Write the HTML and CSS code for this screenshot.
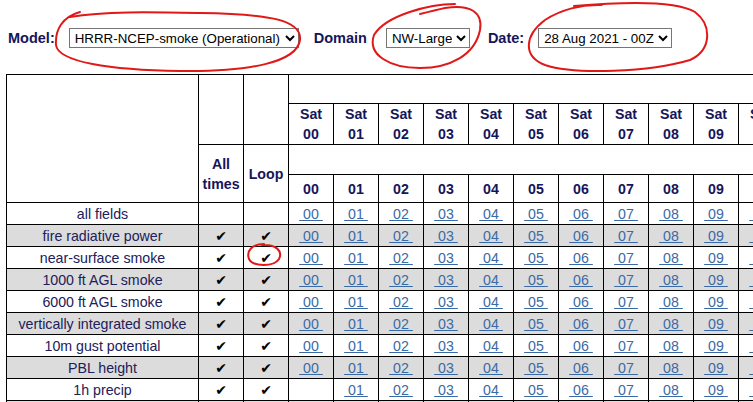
FILE: index.html
```html
<!DOCTYPE html>
<html lang="en">
<head>
  <meta charset="UTF-8" />
  <title>HRRR-Smoke Products</title>
  <meta name="viewport" content="width=device-width, initial-scale=1.0" />
  <link rel="stylesheet" href="styles.css">
</head>
<body>
  <form class="picker">
    <label class="lbl lbl-model">Model:</label>
    <select class="sel sel-model">
      <option selected>HRRR-NCEP-smoke (Operational)</option>
      <option>HRRR-smoke (Experimental)</option>
    </select>
    <label class="lbl lbl-domain">Domain</label>
    <select class="sel sel-domain">
      <option>Full</option>
      <option selected>NW-Large</option>
      <option>SW</option>
    </select>
    <label class="lbl lbl-date">Date:</label>
    <select class="sel sel-date">
      <option selected>28 Aug 2021 - 00Z</option>
      <option>27 Aug 2021 - 18Z</option>
    </select>
  </form>

  <table class="grid">
    <colgroup>
      <col class="c-name">
      <col class="c-all"><col class="c-loop">
      <col class="c-hr"><col class="c-hr"><col class="c-hr"><col class="c-hr"><col class="c-hr"><col class="c-hr">
      <col class="c-hr"><col class="c-hr"><col class="c-hr"><col class="c-hr"><col class="c-hr">
    </colgroup>
    <!-- header -->
    <tr class="h-top">
      <td class="corner" rowspan="4"></td>
      <td rowspan="2"></td>
      <td rowspan="2"></td>
      <td class="spacer" colspan="11"></td>
    </tr>
    <tr class="h-day">
      <th>Sat<br>00</th><th>Sat<br>01</th><th>Sat<br>02</th><th>Sat<br>03</th><th>Sat<br>04</th><th>Sat<br>05</th>
      <th>Sat<br>06</th><th>Sat<br>07</th><th>Sat<br>08</th><th>Sat<br>09</th><th>Sat<br>10</th>
    </tr>
    <tr class="h-gap">
      <th rowspan="2">All<br>times</th>
      <th rowspan="2">Loop</th>
      <td class="spacer" colspan="11"></td>
    </tr>
    <tr class="h-hour">
      <th>00</th><th>01</th><th>02</th><th>03</th><th>04</th><th>05</th>
      <th>06</th><th>07</th><th>08</th><th>09</th><th>10</th>
    </tr>

    <!-- fields -->
    <tr>
      <td class="name">all fields</td><td></td><td></td>
      <td><a href="#">&nbsp;00&nbsp;</a></td><td><a href="#">&nbsp;01&nbsp;</a></td><td><a href="#">&nbsp;02&nbsp;</a></td><td><a href="#">&nbsp;03&nbsp;</a></td>
      <td><a href="#">&nbsp;04&nbsp;</a></td><td><a href="#">&nbsp;05&nbsp;</a></td><td><a href="#">&nbsp;06&nbsp;</a></td><td><a href="#">&nbsp;07&nbsp;</a></td>
      <td><a href="#">&nbsp;08&nbsp;</a></td><td><a href="#">&nbsp;09&nbsp;</a></td><td><a href="#">&nbsp;10&nbsp;</a></td>
    </tr>
    <tr class="alt">
      <td class="name">fire radiative power</td><td class="chk">&#10004;</td><td class="chk">&#10004;</td>
      <td><a href="#">&nbsp;00&nbsp;</a></td><td><a href="#">&nbsp;01&nbsp;</a></td><td><a href="#">&nbsp;02&nbsp;</a></td><td><a href="#">&nbsp;03&nbsp;</a></td>
      <td><a href="#">&nbsp;04&nbsp;</a></td><td><a href="#">&nbsp;05&nbsp;</a></td><td><a href="#">&nbsp;06&nbsp;</a></td><td><a href="#">&nbsp;07&nbsp;</a></td>
      <td><a href="#">&nbsp;08&nbsp;</a></td><td><a href="#">&nbsp;09&nbsp;</a></td><td><a href="#">&nbsp;10&nbsp;</a></td>
    </tr>
    <tr>
      <td class="name">near-surface smoke</td><td class="chk">&#10004;</td><td class="chk">&#10004;</td>
      <td><a href="#">&nbsp;00&nbsp;</a></td><td><a href="#">&nbsp;01&nbsp;</a></td><td><a href="#">&nbsp;02&nbsp;</a></td><td><a href="#">&nbsp;03&nbsp;</a></td>
      <td><a href="#">&nbsp;04&nbsp;</a></td><td><a href="#">&nbsp;05&nbsp;</a></td><td><a href="#">&nbsp;06&nbsp;</a></td><td><a href="#">&nbsp;07&nbsp;</a></td>
      <td><a href="#">&nbsp;08&nbsp;</a></td><td><a href="#">&nbsp;09&nbsp;</a></td><td><a href="#">&nbsp;10&nbsp;</a></td>
    </tr>
    <tr class="alt">
      <td class="name">1000 ft AGL smoke</td><td class="chk">&#10004;</td><td class="chk">&#10004;</td>
      <td><a href="#">&nbsp;00&nbsp;</a></td><td><a href="#">&nbsp;01&nbsp;</a></td><td><a href="#">&nbsp;02&nbsp;</a></td><td><a href="#">&nbsp;03&nbsp;</a></td>
      <td><a href="#">&nbsp;04&nbsp;</a></td><td><a href="#">&nbsp;05&nbsp;</a></td><td><a href="#">&nbsp;06&nbsp;</a></td><td><a href="#">&nbsp;07&nbsp;</a></td>
      <td><a href="#">&nbsp;08&nbsp;</a></td><td><a href="#">&nbsp;09&nbsp;</a></td><td><a href="#">&nbsp;10&nbsp;</a></td>
    </tr>
    <tr>
      <td class="name">6000 ft AGL smoke</td><td class="chk">&#10004;</td><td class="chk">&#10004;</td>
      <td><a href="#">&nbsp;00&nbsp;</a></td><td><a href="#">&nbsp;01&nbsp;</a></td><td><a href="#">&nbsp;02&nbsp;</a></td><td><a href="#">&nbsp;03&nbsp;</a></td>
      <td><a href="#">&nbsp;04&nbsp;</a></td><td><a href="#">&nbsp;05&nbsp;</a></td><td><a href="#">&nbsp;06&nbsp;</a></td><td><a href="#">&nbsp;07&nbsp;</a></td>
      <td><a href="#">&nbsp;08&nbsp;</a></td><td><a href="#">&nbsp;09&nbsp;</a></td><td><a href="#">&nbsp;10&nbsp;</a></td>
    </tr>
    <tr class="alt">
      <td class="name">vertically integrated smoke</td><td class="chk">&#10004;</td><td class="chk">&#10004;</td>
      <td><a href="#">&nbsp;00&nbsp;</a></td><td><a href="#">&nbsp;01&nbsp;</a></td><td><a href="#">&nbsp;02&nbsp;</a></td><td><a href="#">&nbsp;03&nbsp;</a></td>
      <td><a href="#">&nbsp;04&nbsp;</a></td><td><a href="#">&nbsp;05&nbsp;</a></td><td><a href="#">&nbsp;06&nbsp;</a></td><td><a href="#">&nbsp;07&nbsp;</a></td>
      <td><a href="#">&nbsp;08&nbsp;</a></td><td><a href="#">&nbsp;09&nbsp;</a></td><td><a href="#">&nbsp;10&nbsp;</a></td>
    </tr>
    <tr>
      <td class="name">10m gust potential</td><td class="chk">&#10004;</td><td class="chk">&#10004;</td>
      <td><a href="#">&nbsp;00&nbsp;</a></td><td><a href="#">&nbsp;01&nbsp;</a></td><td><a href="#">&nbsp;02&nbsp;</a></td><td><a href="#">&nbsp;03&nbsp;</a></td>
      <td><a href="#">&nbsp;04&nbsp;</a></td><td><a href="#">&nbsp;05&nbsp;</a></td><td><a href="#">&nbsp;06&nbsp;</a></td><td><a href="#">&nbsp;07&nbsp;</a></td>
      <td><a href="#">&nbsp;08&nbsp;</a></td><td><a href="#">&nbsp;09&nbsp;</a></td><td><a href="#">&nbsp;10&nbsp;</a></td>
    </tr>
    <tr class="alt">
      <td class="name">PBL height</td><td class="chk">&#10004;</td><td class="chk">&#10004;</td>
      <td><a href="#">&nbsp;00&nbsp;</a></td><td><a href="#">&nbsp;01&nbsp;</a></td><td><a href="#">&nbsp;02&nbsp;</a></td><td><a href="#">&nbsp;03&nbsp;</a></td>
      <td><a href="#">&nbsp;04&nbsp;</a></td><td><a href="#">&nbsp;05&nbsp;</a></td><td><a href="#">&nbsp;06&nbsp;</a></td><td><a href="#">&nbsp;07&nbsp;</a></td>
      <td><a href="#">&nbsp;08&nbsp;</a></td><td><a href="#">&nbsp;09&nbsp;</a></td><td><a href="#">&nbsp;10&nbsp;</a></td>
    </tr>
    <tr>
      <td class="name">1h precip</td><td class="chk">&#10004;</td><td class="chk">&#10004;</td>
      <td></td><td><a href="#">&nbsp;01&nbsp;</a></td><td><a href="#">&nbsp;02&nbsp;</a></td><td><a href="#">&nbsp;03&nbsp;</a></td>
      <td><a href="#">&nbsp;04&nbsp;</a></td><td><a href="#">&nbsp;05&nbsp;</a></td><td><a href="#">&nbsp;06&nbsp;</a></td><td><a href="#">&nbsp;07&nbsp;</a></td>
      <td><a href="#">&nbsp;08&nbsp;</a></td><td><a href="#">&nbsp;09&nbsp;</a></td><td><a href="#">&nbsp;10&nbsp;</a></td>
    </tr>
    <tr class="alt">
      <td class="name">total precip</td><td class="chk">&#10004;</td><td class="chk">&#10004;</td>
      <td></td><td><a href="#">&nbsp;01&nbsp;</a></td><td><a href="#">&nbsp;02&nbsp;</a></td><td><a href="#">&nbsp;03&nbsp;</a></td>
      <td><a href="#">&nbsp;04&nbsp;</a></td><td><a href="#">&nbsp;05&nbsp;</a></td><td><a href="#">&nbsp;06&nbsp;</a></td><td><a href="#">&nbsp;07&nbsp;</a></td>
      <td><a href="#">&nbsp;08&nbsp;</a></td><td><a href="#">&nbsp;09&nbsp;</a></td><td><a href="#">&nbsp;10&nbsp;</a></td>
    </tr>
  </table>

  <!-- hand-drawn red marks over the screenshot -->
  <svg class="marks" width="753" height="402" viewBox="0 0 753 402">
    <path d="M 80 12 C 62 17, 55 30, 56 45 C 58 62, 110 70, 180 71 C 250 72, 297 62, 300 40 C 302 20, 270 14, 200 13 C 150 12, 105 11, 70 17" />
    <path d="M 455 4 C 430 4, 386 15, 374 35 C 367 55, 390 68, 420 68 C 450 68, 475 55, 480 30 C 483 12, 470 4, 445 8 C 436 10, 428 12, 420 14" />
    <path d="M 602 5 C 582 4, 560 10, 545 20 C 525 35, 522 56, 545 65 C 575 75, 650 72, 690 60 C 712 50, 712 25, 695 12 C 675 0, 620 2, 574 6" />
    <path d="M 264 244 C 252 244, 246 251, 249 259 C 253 267, 274 267, 279 259 C 283 251, 276 244, 262 245" />
  </svg>
</body>
</html>
```

FILE: styles.css
```css
html, body {
  overflow: hidden;
}
body {
  margin: 0;
  font-family: 'Liberation Sans', Arial, sans-serif;
  color: #1a1a5c;
  background: #fff;
}
.picker {
  display: flex;
  align-items: center;
  height: 20px;
  padding: 28px 0 0 8px;
  margin: 0;
}
.lbl {
  font-weight: bold;
  font-size: 14.5px;
  color: #15155a;
}
.lbl-model { margin-right: 14px; }
.lbl-domain { margin-left: 15px; margin-right: 19px; }
.lbl-date { margin-left: 18px; margin-right: 14px; }
.sel {
  height: 20px;
  font-family: 'Liberation Sans', Arial, sans-serif;
  font-size: 13.33px;
  color: #000;
  background: #fff;
  border: 1px solid #767676;
  border-radius: 0;
  padding: 0 1px;
}
.sel-model { width: 230px; }
.sel-domain { width: 84px; }
.sel-date { width: 134px; }

.grid {
  margin: 26px 0 0 6px;
  border-collapse: collapse;
  table-layout: fixed;
  width: 777px;
  font-size: 14.2px;
}
.c-name { width: 192px; }
.c-all, .c-loop, .c-hr { width: 45px; }
.grid td, .grid th {
  border: 1px solid #000;
  padding: 0;
  text-align: center;
  line-height: 20px;
}
.grid th {
  font-weight: bold;
  color: #15155a;
}
.grid .spacer {
  border: none;
  border-top: 1px solid #000;
}
.grid tr { height: 22px; }
.grid .h-top { height: 29px; }
.grid .h-day { height: 41px; }
.grid .h-gap { height: 30px; }
.grid .h-hour { height: 28px; }
.grid .name {
  color: #20205a;
}
.grid .alt {
  background: #dcdcdc;
}
.grid .chk {
  font-family: 'DejaVu Sans', sans-serif;
  font-size: 14px;
  line-height: 18px;
  color: #000;
}
.grid a {
  color: #3a6aa6;
  text-decoration: underline;
}

.marks {
  position: absolute;
  left: 0;
  top: 0;
  pointer-events: none;
}
.marks path {
  fill: none;
  stroke: #e01818;
  stroke-width: 2;
  stroke-linecap: round;
}
```
